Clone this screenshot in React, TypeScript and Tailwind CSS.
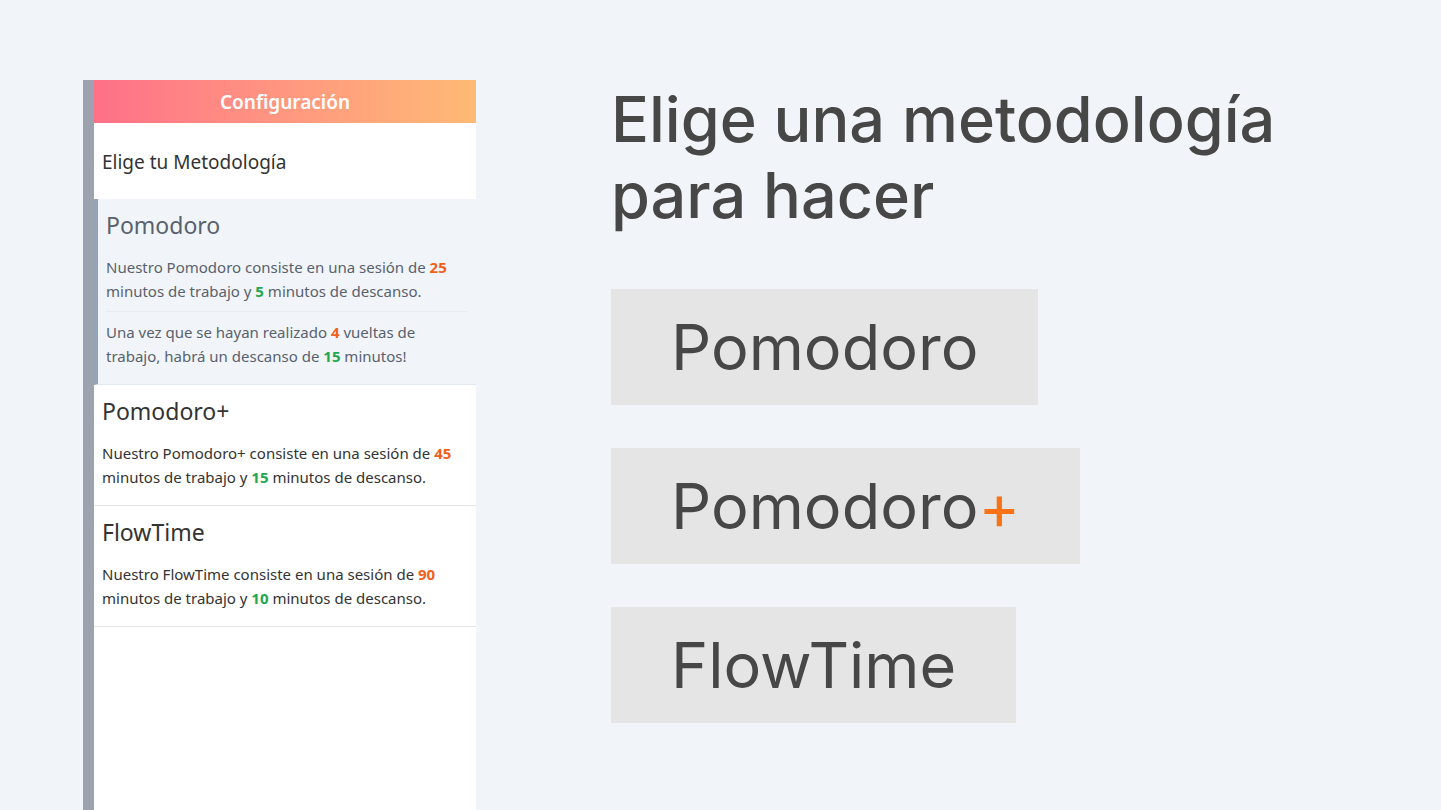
import React from "react";

type Tone = "work" | "rest";

function Num({ tone, children }: { tone: Tone; children: React.ReactNode }) {
  return (
    <strong className={tone === "work" ? "font-bold text-[#f0601c]" : "font-bold text-[#1fa850]"}>
      {children}
    </strong>
  );
}

function Sidebar() {
  return (
    <aside className="flex w-[393px] shrink-0 flex-col border-l-11 border-[#9ca3af] bg-white font-['Noto_Sans',sans-serif] text-[#333333]">
      <header className="flex h-[43px] items-center justify-center bg-linear-to-r from-[#fe7088] to-[#feba74]">
        <h2 className="text-[19px] leading-7 font-semibold text-white">Configuración</h2>
      </header>
      <p className="px-2 pt-[25px] pb-[23px] text-[19px] leading-7">Elige tu Metodología</p>
      <section className="border-b border-l-4 border-b-[#e2e8f0] border-l-[#94a3b8] bg-[#f1f5f9] px-2 pt-2 pb-4 text-[#59616e]">
        <h3 className="text-[23px] leading-9">Pomodoro</h3>
        <p className="mt-3 border-b border-[#e8edf3] pb-2 text-[15px] leading-6">
          Nuestro Pomodoro consiste en una sesión de <Num tone="work">25</Num>
          <br />
          minutos de trabajo y <Num tone="rest">5</Num> minutos de descanso.
        </p>
        <p className="mt-2 text-[15px] leading-6">
          Una vez que se hayan realizado <Num tone="work">4</Num> vueltas de
          <br />
          trabajo, habrá un descanso de <Num tone="rest">15</Num> minutos!
        </p>
      </section>
      <section className="border-b border-[#e5e7eb] px-2 pt-2 pb-4">
        <h3 className="text-[23px] leading-9">Pomodoro+</h3>
        <p className="mt-3 text-[15px] leading-6">
          Nuestro Pomodoro+ consiste en una sesión de <Num tone="work">45</Num>
          <br />
          minutos de trabajo y <Num tone="rest">15</Num> minutos de descanso.
        </p>
      </section>
      <section className="border-b border-[#e5e7eb] px-2 pt-2 pb-4">
        <h3 className="text-[23px] leading-9">FlowTime</h3>
        <p className="mt-3 text-[15px] leading-6">
          Nuestro FlowTime consiste en una sesión de <Num tone="work">90</Num>
          <br />
          minutos de trabajo y <Num tone="rest">10</Num> minutos de descanso.
        </p>
      </section>
    </aside>
  );
}

function Method({ children }: { children: React.ReactNode }) {
  return (
    <li className="bg-[#e5e5e5] px-[60px] py-5 text-[63px] leading-[76px] text-[#474747]">
      {children}
    </li>
  );
}

export default function App() {
  return (
    <main className="flex min-h-screen gap-[135px] bg-[#f1f5f9] pt-20 pl-[83px] font-['Inter',sans-serif]">
      <Sidebar />
      <div className="min-w-0 flex-1">
        <h1 className="pt-px text-[63px] leading-[76px] font-medium text-[#474747]">
          Elige una metodología
          <br />
          para hacer
        </h1>
        <ul className="mt-14 flex flex-col items-start gap-[43px]">
          <Method>Pomodoro</Method>
          <Method>
            Pomodoro<span className="text-[#f97316]">+</span>
          </Method>
          <Method>FlowTime</Method>
        </ul>
      </div>
    </main>
  );
}
